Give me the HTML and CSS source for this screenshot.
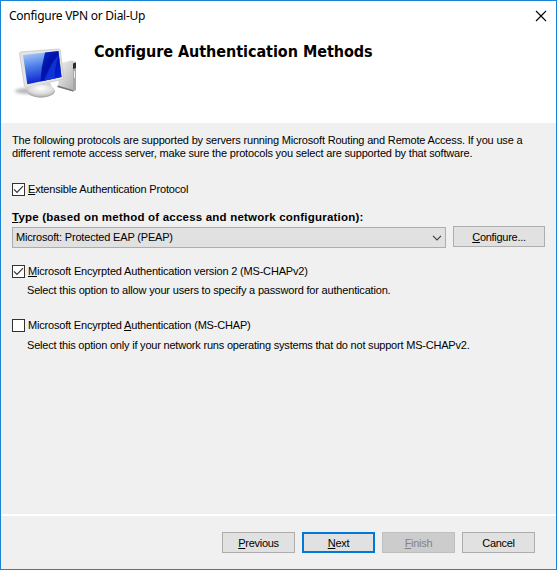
FILE: index.html
```html
<!DOCTYPE html>
<html lang="en">
<head>
<meta charset="utf-8">
<title>Configure VPN or Dial-Up</title>
<link rel="stylesheet" href="styles.css">
</head>
<body>
<main class="dialog">
  <header class="header">
    <div class="titlebar">
      <span class="title">Configure VPN or Dial-Up</span>
      <svg class="close" width="12" height="12" viewBox="0 0 12 12"><path d="M1 1 11 11M11 1 1 11" stroke="#000" stroke-width="1.1" fill="none"/></svg>
    </div>
    <div class="banner">
      <svg class="computer" width="66" height="54" viewBox="0 0 66 54">
        <defs>
          <linearGradient id="screen" x1="0" y1="0" x2="0.25" y2="1"><stop offset="0" stop-color="#bcd6fc"/><stop offset=".5" stop-color="#4b7ee8"/><stop offset="1" stop-color="#0a20d0"/></linearGradient>
          <linearGradient id="deep" x1="0" y1="0" x2="1" y2="1"><stop offset="0" stop-color="#0a36c8"/><stop offset=".4" stop-color="#0010a8"/><stop offset="1" stop-color="#0526e0"/></linearGradient>
          <linearGradient id="tower" x1="0" y1="0" x2="1" y2="1"><stop offset="0" stop-color="#f4f4f4"/><stop offset="1" stop-color="#a9a9a9"/></linearGradient>
          <radialGradient id="base" cx=".5" cy=".3" r=".7"><stop offset="0" stop-color="#fff"/><stop offset=".6" stop-color="#dcdcdc"/><stop offset="1" stop-color="#a8a8a8"/></radialGradient>
          <filter id="soft" x="-20%" y="-40%" width="140%" height="180%"><feGaussianBlur stdDeviation="1.5"/></filter>
        </defs>
        <ellipse cx="16" cy="45" rx="13" ry="3" fill="#888" opacity=".6" filter="url(#soft)"/>
        <path d="M48 17 60 14.5 64 16V44L61 45.5 46 41Z" fill="url(#tower)"/>
        <path d="M61 17.5 64 16V44L61 45.5Z" fill="#a8a8a8"/>
        <path d="M61 17.5 64 16.5V22L61 23Z" fill="#203426"/>
        <path d="M62.5 25V32" stroke="#eee"/>
        <path d="M46 39.5 61 44 61 45.5 45 41Z" fill="#777"/>
        <path d="M7.5 7.5Q7.5 6 9 5.9L46.5 3Q48 3 48.3 4.4L51.5 31.5Q51.5 33 50 33.4L15 41.5Q12.8 41.8 12.4 39.5Z" fill="#e4e4e4" stroke="#c0c0c0" stroke-width=".7"/>
        <path d="M11 9 46.5 5 49.5 31 15.3 38.3Z" fill="url(#screen)"/>
        <path d="M33 6.5 46.5 5 49.5 31 28.5 35.5Q29 21 33 6.5Z" fill="url(#deep)"/>
        <path d="M41.5 15Q37 23 32 34.7L43 32.4Q42 23 46.8 9Z" fill="#1744e6" opacity=".6"/>
        <path d="M28 38.8 38 36.5 41 43H28Z" fill="#d6d6d6"/>
        <ellipse cx="29" cy="45" rx="14" ry="6.5" fill="url(#base)"/>
        <path d="M16 47Q22 51.8 31 51T42.8 45" fill="none" stroke="#a5a5a5" stroke-width=".7"/>
      </svg>
      <h1 class="heading">Configure Authentication Methods</h1>
    </div>
  </header>
  <section class="content">
    <p class="intro"><span class="t">The following protocols are supported by servers running Microsoft Routing and Remote Access. If you use a</span><br><span class="t">different remote access server, make sure the protocols you select are supported by that software.</span></p>
    <label class="check eap"><span class="box"><svg width="11" height="11" viewBox="0 0 11 11"><path d="M1 5.3 4 8.3 10 2.2"/></svg></span><span class="t"><u>E</u>xtensible Authentication Protocol</span></label>
    <div class="type-label"><span class="type-text"><u>T</u>ype (based on method of access and network configuration):</span></div>
    <div class="type-row">
      <div class="select"><span class="t">Microsoft: Protected EAP (PEAP)</span><svg width="10" height="6" viewBox="0 0 10 6"><path d="M1 .8 5 4.8 9 .8"/></svg></div>
      <button class="button configure"><u>C</u>onfigure...</button>
    </div>
    <label class="check v2"><span class="box"><svg width="11" height="11" viewBox="0 0 11 11"><path d="M1 5.3 4 8.3 10 2.2"/></svg></span><span class="t"><u>M</u>icrosoft Encyrpted Authentication version 2 (MS-CHAPv2)</span></label>
    <p class="hint"><span class="t">Select this option to allow your users to specify a password for authentication.</span></p>
    <label class="check v1"><span class="box"></span><span class="t">Microsoft Encyrpted <u>A</u>uthentication (MS-CHAP)</span></label>
    <p class="hint last"><span class="t">Select this option only if your network runs operating systems that do not support MS-CHAPv2.</span></p>
  </section>
  <footer class="footer">
    <button class="button"><u>P</u>revious</button>
    <button class="button primary"><u>N</u>ext</button>
    <button class="button" disabled><u>F</u>inish</button>
    <button class="button">Cancel</button>
  </footer>
</main>
</body>
</html>
```
FILE: styles.css
```css
* { box-sizing: border-box; }
body { margin: 0; font: 11px/13px "Liberation Sans", Arial, sans-serif; color: #000; }
.dialog { width: 557px; height: 570px; border: 1px solid #1883d7; background: #f0f0f0; display: flex; flex-direction: column; }
.header { height: 122px; background: #fff; }
.titlebar { height: 30px; padding: 0 9px 0 8px; display: flex; align-items: center; justify-content: space-between; }
.title { font: 12px/16px "Noto Sans", "Open Sans", sans-serif; letter-spacing: -.27px; }
.banner { display: flex; padding: 15px 0 0 11px; }
.computer { flex: none; }
.heading { margin: -4px 0 0 16px; font: bold 16px/20px "DejaVu Sans Condensed", "DejaVu Sans", sans-serif; letter-spacing: -.04px; white-space: nowrap; }
.content { flex: 1; padding: 11px 11px 0; }
.t { white-space: nowrap; letter-spacing: -.18px; }
u { text-decoration: underline; text-underline-offset: 1px; text-decoration-skip-ink: none; }
.intro { margin: 0; }
.check { display: flex; align-items: center; gap: 3px; height: 13px; }
.box { width: 13px; height: 13px; border: 1px solid #333; background: #fff; display: block; }
.box svg { display: block; fill: none; stroke: #333; stroke-width: 1.2; }
.eap { margin-top: 23px; }
.type-label { height: 13px; margin-top: 15px; font-weight: bold; font-size: 11.5px; letter-spacing: .21px; white-space: nowrap; }
.type-row { display: flex; gap: 7px; margin-top: 2px; }
.select { width: 434px; height: 21px; margin-top: 1px; border: 1px solid #adadad; background: #e1e1e1; display: flex; align-items: center; justify-content: space-between; padding: 0 3px; }
.select svg { fill: none; stroke: #444; stroke-width: 1.2; }
.button { width: 73px; height: 21px; padding: 1px 0 0; border: 1px solid #adadad; background: #e1e1e1; font: inherit; letter-spacing: -.28px; color: #000; border-radius: 0; }
.configure { width: 92px; }
.v2 { margin-top: 17px; }
.hint { margin: 6px 0 0 15px; }
.v1 { margin-top: 22px; }
.last { margin-top: 7px; }
.hint.last .t { letter-spacing: -.205px; }
.footer { height: 55px; border-top: 2px solid #fff; padding: 16px 21px 0 0; display: flex; justify-content: flex-end; gap: 7px; }
.primary { border: 2px solid #0078d7; }
.button:disabled { background: #ccc; border-color: #bfbfbf; color: #838383; }
```
